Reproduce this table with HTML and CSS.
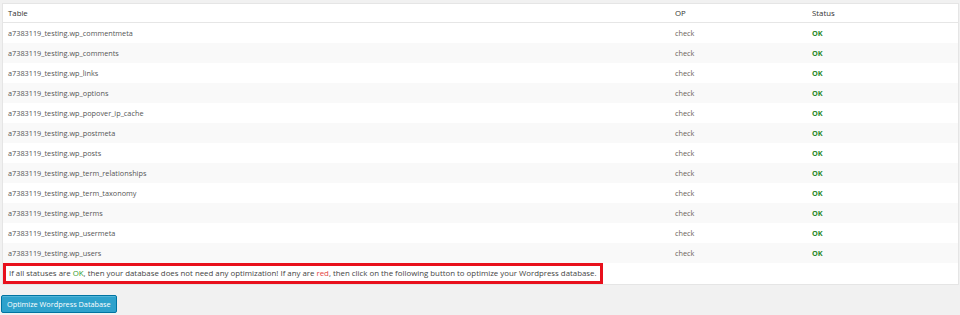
FILE: index.html
```html
<!DOCTYPE html>
<html>
<head>
<meta charset="utf-8">
<link rel="stylesheet" href="styles.css">
</head>
<body>
<div class="wrap">
  <table class="widefat">
    <thead>
      <tr><th class="c-table">Table</th><th class="c-op">OP</th><th class="c-status">Status</th></tr>
    </thead>
    <tbody>
      <tr><td>a7383119_testing.wp_commentmeta</td><td class="op">check</td><td class="ok">OK</td></tr>
      <tr class="alt"><td>a7383119_testing.wp_comments</td><td class="op">check</td><td class="ok">OK</td></tr>
      <tr><td>a7383119_testing.wp_links</td><td class="op">check</td><td class="ok">OK</td></tr>
      <tr class="alt"><td>a7383119_testing.wp_options</td><td class="op">check</td><td class="ok">OK</td></tr>
      <tr><td>a7383119_testing.wp_popover_ip_cache</td><td class="op">check</td><td class="ok">OK</td></tr>
      <tr class="alt"><td>a7383119_testing.wp_postmeta</td><td class="op">check</td><td class="ok">OK</td></tr>
      <tr><td>a7383119_testing.wp_posts</td><td class="op">check</td><td class="ok">OK</td></tr>
      <tr class="alt"><td>a7383119_testing.wp_term_relationships</td><td class="op">check</td><td class="ok">OK</td></tr>
      <tr><td>a7383119_testing.wp_term_taxonomy</td><td class="op">check</td><td class="ok">OK</td></tr>
      <tr class="alt"><td>a7383119_testing.wp_terms</td><td class="op">check</td><td class="ok">OK</td></tr>
      <tr><td>a7383119_testing.wp_usermeta</td><td class="op">check</td><td class="ok">OK</td></tr>
      <tr class="alt"><td>a7383119_testing.wp_users</td><td class="op">check</td><td class="ok">OK</td></tr>
    </tbody>
    <tfoot>
      <tr><td colspan="3" class="foot"><span class="notice">If all statuses are <span class="green">OK</span>, then your database does not need any optimization! If any are <span class="red">red</span>, then click on the following button to optimize your Wordpress database.</span></td></tr>
    </tfoot>
  </table>
  <div class="actions"><button class="btn">Optimize Wordpress Database</button></div>
</div>
</body>
</html>
```

FILE: styles.css
```css
html, body {
  margin: 0;
  padding: 0;
  background: #f1f1f1;
}
body {
  font-family: "Open Sans", "Liberation Sans", sans-serif;
  color: #555;
}
.wrap {
  padding: 3px 1px 0 2px;
}
.widefat {
  width: 100%;
  border-collapse: collapse;
  background: #fff;
  border: 1px solid #e5e5e5;
  font-size: 7.3px;
}
.widefat th {
  font-weight: 400;
  text-align: left;
  color: #333;
  height: 18px;
  padding: 0 5px;
  border-bottom: 1px solid #e6e6e6;
  font-size: 7.8px;
}
.c-table { width: 657px; }
.c-op { width: 127px; }
.widefat td {
  height: 20px;
  padding: 0 5px;
  color: #555;
  vertical-align: middle;
}
.widefat td.op {
  color: #6b625a;
}
.widefat tr.alt td {
  background: #f9f9f9;
}
.widefat td.ok {
  color: #2b8a2b;
  font-weight: 700;
}
.widefat tfoot td {
  padding: 0;
  height: 21px;
}
.notice {
  display: block;
  width: fit-content;
  border: 3px solid #e8101c;
  padding: 1px 3px 1px 3px;
  font-size: 7.85px;
  color: #444;
  line-height: 13px;
}
.green { color: #2e9b2e; }
.red { color: #e4433e; }
.actions {
  display: flex;
  padding: 10px 0 0 0;
  margin-left: -1px;
}
.btn {
  font-family: "Open Sans", "Liberation Sans", sans-serif;
  font-size: 7.3px;
  color: #fff;
  background: #2ea2cc;
  border: 1px solid #0074a2;
  border-radius: 2px;
  box-shadow: inset 0 1px 0 rgba(120,200,230,0.5);
  height: 18px;
  padding: 0 5px;
  line-height: 16px;
}
```
